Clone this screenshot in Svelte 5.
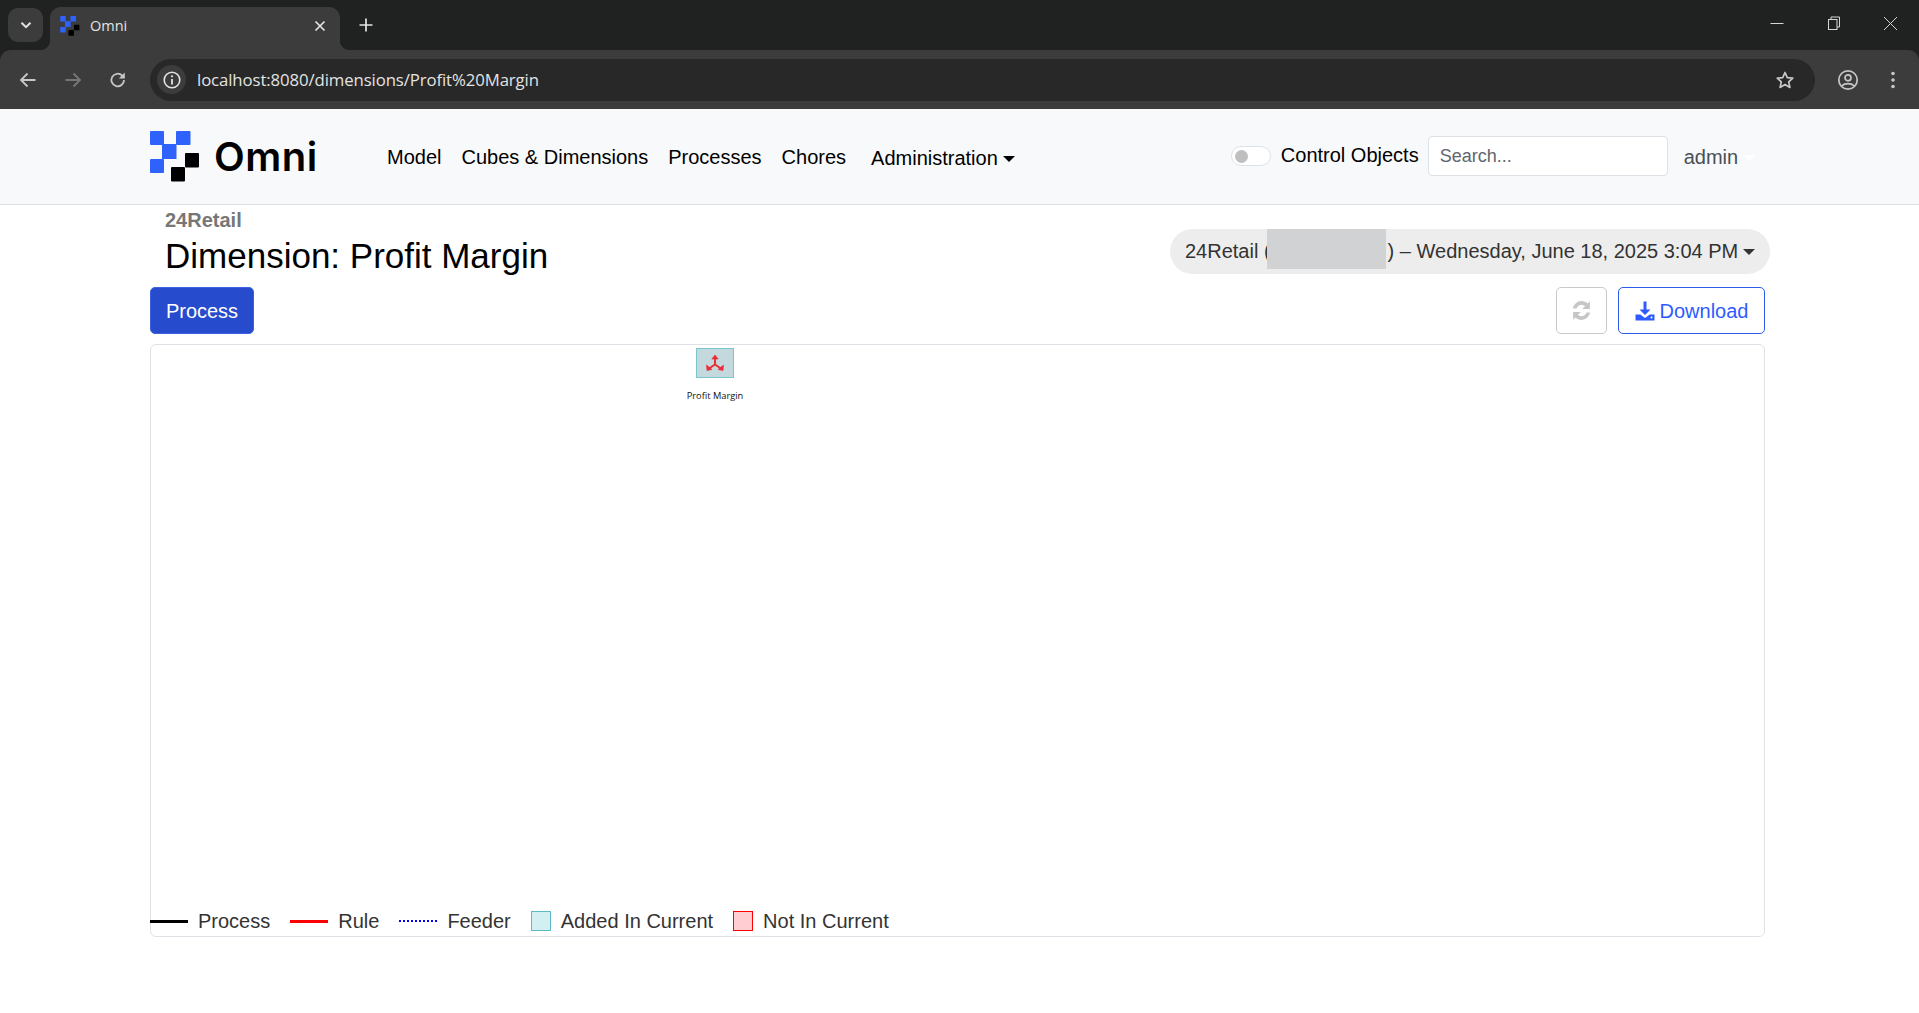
<script lang="ts">
	// toolbar legend entries
	const legend = [
		{ kind: 'line process', label: 'Process' },
		{ kind: 'line rule', label: 'Rule' },
		{ kind: 'line feeder', label: 'Feeder' },
		{ kind: 'box added', label: 'Added In Current' },
		{ kind: 'box missing', label: 'Not In Current' }
	];
	const navLinks = ['Model', 'Cubes & Dimensions', 'Processes', 'Chores'];
</script>

{#snippet mark()}
	<rect x="0" y="0" width="14" height="14" rx="1" fill="#2f62fb" />
	<rect x="26" y="0" width="14.5" height="14" rx="1" fill="#2f62fb" />
	<rect x="12" y="13" width="14.5" height="15" fill="#2f62fb" />
	<rect x="0" y="28" width="14" height="14" rx="1" fill="#2f62fb" />
	<rect x="35" y="22" width="14" height="14.5" rx="1" fill="#000" />
	<rect x="21" y="36" width="14" height="14.5" rx="1" fill="#000" />
{/snippet}

<div class="browser">
	<div class="tabstrip">
		<button class="tabsearch" aria-label="tabs">
			<svg width="16" height="16" viewBox="0 0 16 16"><path d="M3.5 5.8 8 10.2l4.5-4.4" fill="none" stroke="#e3e3e3" stroke-width="2" /></svg>
		</button>
		<div class="tab">
			<svg class="favicon" width="20" height="20" viewBox="0 0 50 51">{@render mark()}</svg>
			<span class="tabtitle">Omni</span>
			<svg class="tabclose" width="14" height="14" viewBox="0 0 14 14"><path d="M2.5 2.5l9 9m0-9l-9 9" stroke="#e3e3e3" stroke-width="1.7" /></svg>
		</div>
		<svg class="newtab" width="16" height="16" viewBox="0 0 16 16"><path d="M8 1.5v13M1.5 8h13" stroke="#e3e3e3" stroke-width="1.7" /></svg>
		<div class="winctl">
			<svg width="14" height="14" viewBox="0 0 14 14"><path d="M0.500 7.500h13" stroke="#d6d6d6" stroke-width="1" /></svg>
			<svg width="14" height="14" viewBox="0 0 14 14" fill="none"><rect x="1.500" y="3.500" width="8.500" height="10" stroke="#d6d6d6" /><path d="M4 3.500V1h8.500v10H10" stroke="#d6d6d6" /></svg>
			<svg width="15" height="15" viewBox="0 0 15 15"><path d="M1 1l13 13m0-13L1 14" stroke="#d6d6d6" stroke-width="1" /></svg>
		</div>
	</div>
	<div class="toolbar">
		<svg class="tool" width="20" height="20" viewBox="0 0 20 20" fill="none"><path d="M17.500 10H3.500M9.500 3.500 3 10l6.500 6.500" stroke="#c7c7c7" stroke-width="1.800" /></svg>
		<svg class="tool" width="20" height="20" viewBox="0 0 20 20" fill="none"><path d="M2.500 10h14M10.500 3.500 17 10l-6.500 6.500" stroke="#777" stroke-width="1.800" /></svg>
		<svg class="tool" width="20" height="20" viewBox="0 0 20 20" fill="none"><path d="M16 10a6.300 6.300 0 1 1-1.900-4.500L16 7.500" stroke="#c7c7c7" stroke-width="1.800" /><path d="M16.800 2.500v6h-6z" fill="#c7c7c7" /></svg>
		<div class="omnibox">
			<span class="chip">
				<svg width="20" height="20" viewBox="0 0 20 20" fill="none"><circle cx="10" cy="10" r="7.800" stroke="#e3e3e3" stroke-width="1.600" /><path d="M10 9v5.500" stroke="#e3e3e3" stroke-width="1.800" /><circle cx="10" cy="6.300" r="1.100" fill="#e3e3e3" /></svg>
			</span>
			<span class="url">localhost:8080/dimensions/Profit%20Margin</span>
			<svg class="star" width="20" height="20" viewBox="0 0 20 20" fill="none"><path d="M10 2.500l2.300 5.100 5.500.6-4.100 3.700 1.200 5.500L10 14.600l-4.900 2.800 1.200-5.500-4.100-3.700 5.500-.6z" stroke="#c7c7c7" stroke-width="1.700" stroke-linejoin="round" /></svg>
		</div>
		<svg class="profile" width="22" height="22" viewBox="0 0 22 22" fill="none"><circle cx="11" cy="11" r="9.200" stroke="#c7c7c7" stroke-width="1.700" /><circle cx="11" cy="8.800" r="3" stroke="#c7c7c7" stroke-width="1.700" /><path d="M4.800 16.800c3-2.800 9.400-2.800 12.400 0" stroke="#c7c7c7" stroke-width="1.700" /></svg>
		<svg class="kebab" width="6" height="20" viewBox="0 0 6 20"><circle cx="3" cy="3.500" r="1.800" fill="#c7c7c7" /><circle cx="3" cy="10" r="1.800" fill="#c7c7c7" /><circle cx="3" cy="16.500" r="1.800" fill="#c7c7c7" /></svg>
	</div>
</div>

<nav class="navbar">
	<div class="brand">
		<svg width="50" height="51" viewBox="0 0 50 51">{@render mark()}</svg>
		<span class="brandname">Omni</span>
	</div>
	<div class="links">
		{#each navLinks as link}
			<span class="link">{link}</span>
		{/each}
		<span class="link admin">Administration<i class="caret"></i></span>
	</div>
	<div class="navright">
		<span class="switch"><i></i></span>
		<span class="switchlabel">Control Objects</span>
		<input class="search" type="text" placeholder="Search..." />
		<span class="user">admin<i class="caret white"></i></span>
	</div>
</nav>

<main class="page">
	<div class="headrow">
		<div class="titles">
			<div class="server">24Retail</div>
			<h1>Dimension: Profit Margin</h1>
		</div>
		<div class="snapshot">
			<span>24Retail (</span><span class="redacted"></span><span>) – Wednesday, June 18, 2025 3:04 PM</span><i class="caret"></i>
		</div>
	</div>
	<div class="actions">
		<button class="btn primary">Process</button>
		<div class="actions-right">
			<button class="btn refresh" aria-label="refresh">
				<svg width="23" height="23" viewBox="0 0 20 20" fill="#c6c6c6">
					<path d="M10 1.800c2.100 0 4 .8 5.400 2.200L17.300 2v6.700h-6.700l2.500-2.500A4.500 4.500 0 0 0 5.700 8.300H2.500A7.700 7.700 0 0 1 10 1.800z" />
					<path d="M10 18.200c-2.100 0-4-.8-5.400-2.200L2.700 18v-6.700h6.700l-2.500 2.500a4.500 4.500 0 0 0 7.400-2.100h3.200a7.700 7.700 0 0 1-7.500 6.500z" />
				</svg>
			</button>
			<button class="btn download">
				<svg width="20" height="20" viewBox="0 0 20 20" fill="#2d5bff">
					<path d="M8.500 0.500h3v8h4L10 14 4.500 8.500h4z" />
					<path d="M0.500 13.500h4.800L10 17l4.700-3.500h4.800v6h-19z" />
					<circle cx="16.500" cy="16.600" r="1" fill="#fff" />
				</svg>
				Download
			</button>
		</div>
	</div>
	<section class="graph">
		<div class="node">
			<div class="nodebox">
				<svg width="20" height="18" viewBox="0 0 20 18" fill="none" stroke="#ec2b34" stroke-width="2">
					<path d="M10 3v7.500M10 10.500 4 14.500M10 10.500 16 14.500" />
					<path d="M6.800 5 10 1l3.200 4zM1.500 11l.5 5.500 5-1zM18.500 11l-.5 5.500-5-1z" fill="#ec2b34" stroke-width="0.600" />
				</svg>
			</div>
			<span class="nodelabel">Profit Margin</span>
		</div>
		<div class="legend">
			{#each legend as item}
				<span class="entry">
					<i class={item.kind}></i>{item.label}
				</span>
			{/each}
		</div>
	</section>
</main>

<style>
	:global(body) {
		margin: 0;
		background: #fff;
		font-family: "Liberation Sans", Arial, sans-serif;
		color: #212529;
		overflow: hidden;
	}

	.browser {
		font-family: "Open Sans", "Noto Sans", sans-serif;
		color: #e3e3e3;
		background: #202221;
	}
	.tabstrip {
		height: 50px;
		background: #202221;
		display: flex;
		align-items: flex-end;
		padding-left: 8px;
		box-sizing: border-box;
	}
	.tabsearch {
		width: 35px;
		height: 34px;
		margin-bottom: 8px;
		margin-right: 7px;
		border: 0;
		padding: 0;
		border-radius: 10px;
		background: #3c3c3c;
		display: flex;
		align-items: center;
		justify-content: center;
	}
	.tab {
		width: 290px;
		height: 43px;
		box-sizing: border-box;
		background: #3c3c3c;
		border-radius: 11px 11px 0 0;
		display: flex;
		align-items: center;
		padding: 0 13px 6px 10px;
		position: relative;
	}
	.tab::before,
	.tab::after {
		content: '';
		position: absolute;
		bottom: 0;
		width: 10px;
		height: 10px;
	}
	.tab::before {
		left: -10px;
		background: radial-gradient(circle at 0 0, transparent 10px, #3c3c3c 10.5px);
	}
	.tab::after {
		right: -10px;
		background: radial-gradient(circle at 100% 0, transparent 10px, #3c3c3c 10.5px);
	}
	.tabtitle {
		font-size: 14.5px;
		margin-left: 10px;
		flex: 1;
	}
	.newtab {
		margin: 0 0 17px 18px;
	}
	.winctl {
		margin-left: auto;
		display: flex;
		align-items: center;
		gap: 41px;
		padding: 0 21px 0 0;
		align-self: flex-start;
		height: 46px;
	}
	.winctl svg:nth-child(2) {
		margin-right: 1px;
		margin-left: 2px;
	}
	.toolbar {
		height: 59px;
		background: #3c3c3c;
		border-radius: 11px 11px 0 0;
		display: flex;
		align-items: center;
		box-sizing: border-box;
		padding-left: 18px;
		margin-top: 0;
	}
	.tool {
		margin-right: 25px;
	}
	.tool:nth-of-type(3) {
		margin-right: 22px;
	}
	.omnibox {
		width: 1665px;
		height: 42px;
		background: #282828;
		border-radius: 21px;
		display: flex;
		align-items: center;
		padding: 0 20px 0 7px;
		box-sizing: border-box;
	}
	.chip {
		width: 29px;
		height: 29px;
		border-radius: 50%;
		background: #3c3c3c;
		display: flex;
		align-items: center;
		justify-content: center;
	}
	.url {
		margin-left: 11px;
		font-size: 16.750px;
		letter-spacing: -0.1px;
		flex: 1;
	}
	.profile {
		margin-left: 22px;
	}
	.kebab {
		margin-left: 31px;
	}

	.navbar {
		height: 96px;
		box-sizing: border-box;
		background: #f8f9fa;
		border-bottom: 1px solid #dee2e6;
		display: flex;
		align-items: center;
		padding: 0 0 0 150px;
	}
	.brand {
		display: flex;
		align-items: center;
		width: 237px;
		gap: 14px;
	}
	.brandname {
		font-family: Inter, "Noto Sans", sans-serif;
		font-weight: 600;
		font-size: 40px;
		letter-spacing: 0.5px;
		color: #000;
		line-height: 1;
	}
	.links {
		display: flex;
		align-items: center;
		font-size: 20px;
		color: #000;
		gap: 20px;
		margin-top: 2px;
	}
	.admin {
		margin-left: 5px;
		margin-top: 1px;
	}
	.caret {
		display: inline-block;
		width: 0;
		height: 0;
		margin-left: 5px;
		vertical-align: 3px;
		border-top: 6px solid #000;
		border-left: 6px solid transparent;
		border-right: 6px solid transparent;
	}
	.caret.white {
		border-top-color: #fff;
	}
	.navright {
		position: relative;
		display: flex;
		align-items: center;
		margin-left: 216px;
		font-size: 20px;
		margin-top: -1px;
	}
	.switch {
		width: 40px;
		height: 20px;
		box-sizing: border-box;
		border: 1px solid #dee2e6;
		border-radius: 10px;
		background: #fff;
		display: flex;
		align-items: center;
		padding-left: 3px;
	}
	.switch i {
		width: 13px;
		height: 13px;
		border-radius: 50%;
		background: #bfbfbf;
	}
	.switchlabel {
		margin-left: 10px;
		color: #000;
		margin-top: -1px;
	}
	.search {
		margin-left: 9px;
		width: 240px;
		height: 40px;
		box-sizing: border-box;
		border: 1px solid #dee2e6;
		border-radius: 4px;
		background: #fff;
		padding: 0 11px;
		font: 18px "Liberation Sans", Arial, sans-serif;
		margin-top: 0;
	}
	.search::placeholder {
		color: #5f666d;
		opacity: 1;
	}
	.user {
		margin-left: 16px;
		color: #495057;
		margin-top: 2px;
	}

	.page {
		padding: 0 154px 0 150px;
	}
	.headrow {
		display: flex;
		justify-content: space-between;
		align-items: flex-start;
	}
	.titles {
		padding-left: 15px;
	}
	.server {
		font-size: 20px;
		font-weight: 700;
		color: #777;
		line-height: 23px;
		margin-top: 4px;
	}
	h1 {
		margin: 4px 0 0;
		font-size: 35px;
		font-weight: 400;
		line-height: 40px;
		color: #000;
	}
	.snapshot {
		margin: 24px -5px 0 0;
		width: 600px;
		height: 45px;
		box-sizing: border-box;
		padding-left: 15px;
		border-radius: 23px;
		background: #ededed;
		display: flex;
		align-items: center;
		font-size: 20px;
		color: #333;
		position: relative;
	}
	.redacted {
		width: 119px;
		height: 40px;
		background: #d0d2d3;
		align-self: flex-start;
		margin-left: -4px;
		margin-right: 2px;
	}
	.snapshot .caret {
		border-top-color: #333;
	}
	.actions {
		display: flex;
		justify-content: space-between;
		margin-top: 11px;
	}
	.actions-right {
		display: flex;
		gap: 11px;
	}
	.btn {
		height: 47px;
		box-sizing: border-box;
		border-radius: 5px;
		font: 20px "Liberation Sans", Arial, sans-serif;
		background: #fff;
		padding: 0 15px;
		display: flex;
		align-items: center;
		gap: 5px;
	}
	.primary {
		width: 104px;
		justify-content: center;
		background: #264bcc;
		border: 1px solid #3d63e0;
		color: #fff;
		padding-top: 1px;
	}
	.refresh {
		width: 51px;
		justify-content: center;
		padding: 0;
		border: 1px solid #c9c9c9;
		margin-left: 2px;
	}
	.download {
		width: 147px;
		justify-content: center;
		padding: 1px 0 0;
		border: 1px solid #2d5bea;
		color: #2d5bff;
	}
	.graph {
		margin-top: 10px;
		height: 593px;
		box-sizing: border-box;
		border: 1px solid #dee2e6;
		border-radius: 6px;
		position: relative;
		display: flex;
		flex-direction: column;
		justify-content: flex-end;
		padding-bottom: 3px;
	}
	.node {
		position: absolute;
		left: 524px;
		top: 3px;
		width: 80px;
		display: flex;
		flex-direction: column;
		align-items: center;
	}
	.nodebox {
		width: 38px;
		height: 30px;
		box-sizing: border-box;
		border: 1px solid #78c7cf;
		background: #c3d9de;
		display: flex;
		align-items: center;
		justify-content: center;
	}
	.nodelabel {
		font-family: "Open Sans", "Noto Sans", sans-serif;
		font-size: 9.300px;
		color: #111;
		margin-top: 11px;
		white-space: nowrap;
	}
	.legend {
		display: flex;
		align-items: center;
		font-size: 20px;
		color: #333;
		gap: 20px;
		margin-left: -1px;
	}
	.entry {
		display: flex;
		align-items: center;
		height: 24px;
	}
	.line {
		width: 38px;
		margin-right: 10px;
	}
	.process {
		border-top: 3px solid #000;
	}
	.rule {
		border-top: 3px solid #f00;
	}
	.feeder {
		border-top: 2px dotted #00f;
	}
	.box {
		width: 20px;
		height: 20px;
		box-sizing: border-box;
		margin-right: 10px;
	}
	.added {
		background: #d4eff2;
		border: 1px solid #5bbcc8;
	}
	.missing {
		background: #ffcdd2;
		border: 1px solid #f00;
	}
</style>
